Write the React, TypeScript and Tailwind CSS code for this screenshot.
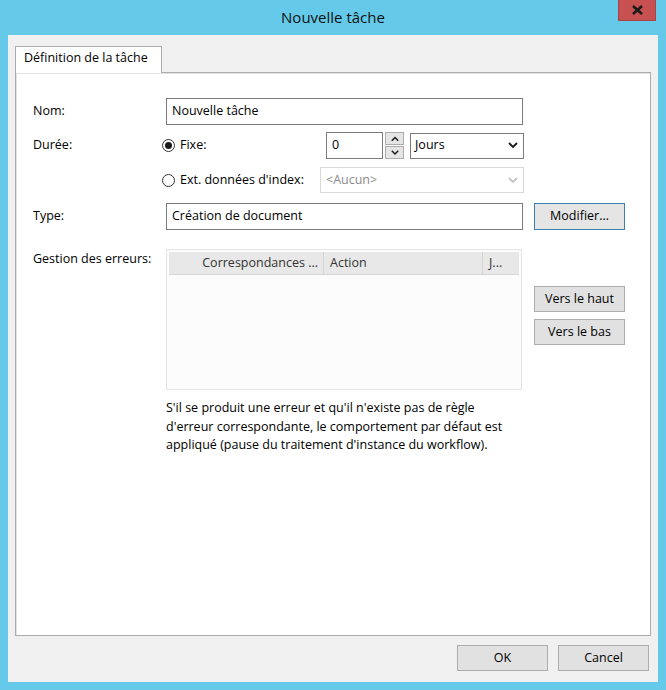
import React from "react";

const font = "font-['Open_Sans',sans-serif]";

const Chevron = ({ up = false, light = false, size = 10 }: { up?: boolean; light?: boolean; size?: number }) => (
  <svg width={size} height={size * 0.7} viewBox="0 0 10 7" className="block">
    <path
      d={up ? "M1 6 L5 2 L9 6" : "M1 1 L5 5 L9 1"}
      fill="none"
      stroke={light ? "#c4c4c4" : "#1a1a1a"}
      strokeWidth="1.8"
    />
  </svg>
);

const Radio = ({ checked }: { checked?: boolean }) => (
  <span className="w-[13px] h-[13px] rounded-full border border-[#333333] bg-white flex items-center justify-center shrink-0">
    {checked && <span className="w-[7px] h-[7px] rounded-full bg-[#1a1a1a]" />}
  </span>
);

const WinButton = ({ label, focused = false, className = "" }: { label: string; focused?: boolean; className?: string }) => (
  <button
    className={`h-[26px] w-[91px] bg-[#e1e1e1] text-[12.5px] text-black border ${
      focused ? "border-[#3c7fb1]" : "border-[#adadad]"
    } ${className}`}
  >
    {label}
  </button>
);

export default function App() {
  return (
    <div className={`w-[666px] h-[690px] bg-[#65c9ea] flex flex-col px-[8px] pb-[8px] ${font} text-[12.5px] text-black`}>
      {/* title bar */}
      <div className="h-[35px] shrink-0 relative flex items-center justify-center">
        <span className="text-[15px] text-[#111]">Nouvelle tâche</span>
        <div className="absolute right-[2px] top-0 w-[38px] h-[21px] bg-[#c75050] flex items-center justify-center border border-[#a84444] border-t-0">
          <svg width="11" height="10" viewBox="0 0 11 10">
            <path d="M1 1 L10 9 M10 1 L1 9" stroke="#1a1a1a" strokeWidth="2.6" />
          </svg>
        </div>
      </div>

      {/* window body */}
      <div className="flex-1 bg-[#f0f0f0] flex flex-col px-[7px] pt-[10px]">
        {/* tab header */}
        <div className="flex h-[27px] shrink-0">
          <div className="w-[147px] bg-white border border-[#acacac] border-b-0 flex items-center pl-[8px] pb-[3px] text-[12.5px] relative top-[1px] z-10">
            Définition de la tâche
          </div>
        </div>

        {/* tab panel */}
        <div className="h-[564px] bg-white border border-[#acacac] shadow-[inset_1px_1px_0_#e3e3e3] pl-[17px] pt-[25px]">
          {/* Nom */}
          <div className="flex items-center h-[27px]">
            <div className="w-[133px]">Nom:</div>
            <div className="w-[357px] h-[27px] border border-[#7a7a7a] flex items-center px-[5px]">Nouvelle tâche</div>
          </div>

          {/* Durée / Fixe */}
          <div className="flex items-center h-[27px] mt-[7px]">
            <div className="w-[129px]">Durée:</div>
            <div className="w-[164px] flex items-center gap-[5px]">
              <Radio checked />
              <span>Fixe:</span>
            </div>
            <div className="w-[57px] h-[27px] border border-[#7a7a7a] flex items-center px-[5px]">0</div>
            <div className="flex flex-col gap-[1px] ml-[2px] w-[19px]">
              <div className="h-[13px] bg-[#e5e5e5] border border-[#acacac] flex items-center justify-center">
                <Chevron up size={8} />
              </div>
              <div className="h-[13px] bg-[#e5e5e5] border border-[#acacac] flex items-center justify-center">
                <Chevron size={8} />
              </div>
            </div>
            <div className="ml-[6px] w-[114px] h-[26px] border border-[#7a7a7a] flex items-center justify-between pl-[4px] pr-[5px]">
              <span>Jours</span>
              <Chevron />
            </div>
          </div>

          {/* Ext. données d'index */}
          <div className="flex items-center h-[26px] mt-[8px]">
            <div className="w-[129px]" />
            <div className="w-[158px] flex items-center gap-[5px]">
              <Radio />
              <span>Ext. données d'index:</span>
            </div>
            <div className="w-[204px] h-[26px] border border-[#d9d9d9] flex items-center justify-between pl-[5px] pr-[5px] text-[#8a8a8a]">
              <span>&lt;Aucun&gt;</span>
              <Chevron light />
            </div>
          </div>

          {/* Type */}
          <div className="flex items-center h-[27px] mt-[10px]">
            <div className="w-[133px]">Type:</div>
            <div className="w-[357px] h-[27px] border border-[#7a7a7a] flex items-center px-[5px]">Création de document</div>
            <WinButton label="Modifier…" focused className="ml-[11px] h-[27px] bg-[#e5e5e5]" />
          </div>

          {/* Gestion des erreurs */}
          <div className="flex items-start mt-[19px]">
            <div className="w-[133px] pt-[1px]">Gestion des erreurs:</div>
            <div className="flex flex-col w-[356px]">
              <div className="w-[356px] h-[141px] border border-[#e3e3e3] bg-[#fcfcfc] p-[2px]">
                <div className="flex h-[23px] bg-[#e8e8e8] border-b border-[#d5d5d5] text-[#333]">
                  <div className="w-[155px] flex items-center justify-end pr-[5px] border-r border-[#d5d5d5]">
                    Correspondances ...
                  </div>
                  <div className="w-[159px] flex items-center pl-[6px] border-r border-[#d5d5d5]">Action</div>
                  <div className="w-[32px] flex items-center pl-[6px]">J...</div>
                </div>
              </div>
              <div className="mt-[9px] leading-[18.5px] whitespace-nowrap">
                S'il se produit une erreur et qu'il n'existe pas de règle
                <br />
                d'erreur correspondante, le comportement par défaut est
                <br />
                appliqué (pause du traitement d'instance du workflow).
              </div>
            </div>
            <div className="flex flex-col gap-[7px] ml-[12px] pt-[37px]">
              <WinButton label="Vers le haut" className="h-[25px]" />
              <WinButton label="Vers le bas" className="h-[25px]" />
            </div>
          </div>
        </div>

        {/* footer buttons */}
        <div className="flex justify-end gap-[10px] mt-[9px] pr-[2px]">
          <WinButton label="OK" />
          <WinButton label="Cancel" />
        </div>
      </div>
    </div>
  );
}
